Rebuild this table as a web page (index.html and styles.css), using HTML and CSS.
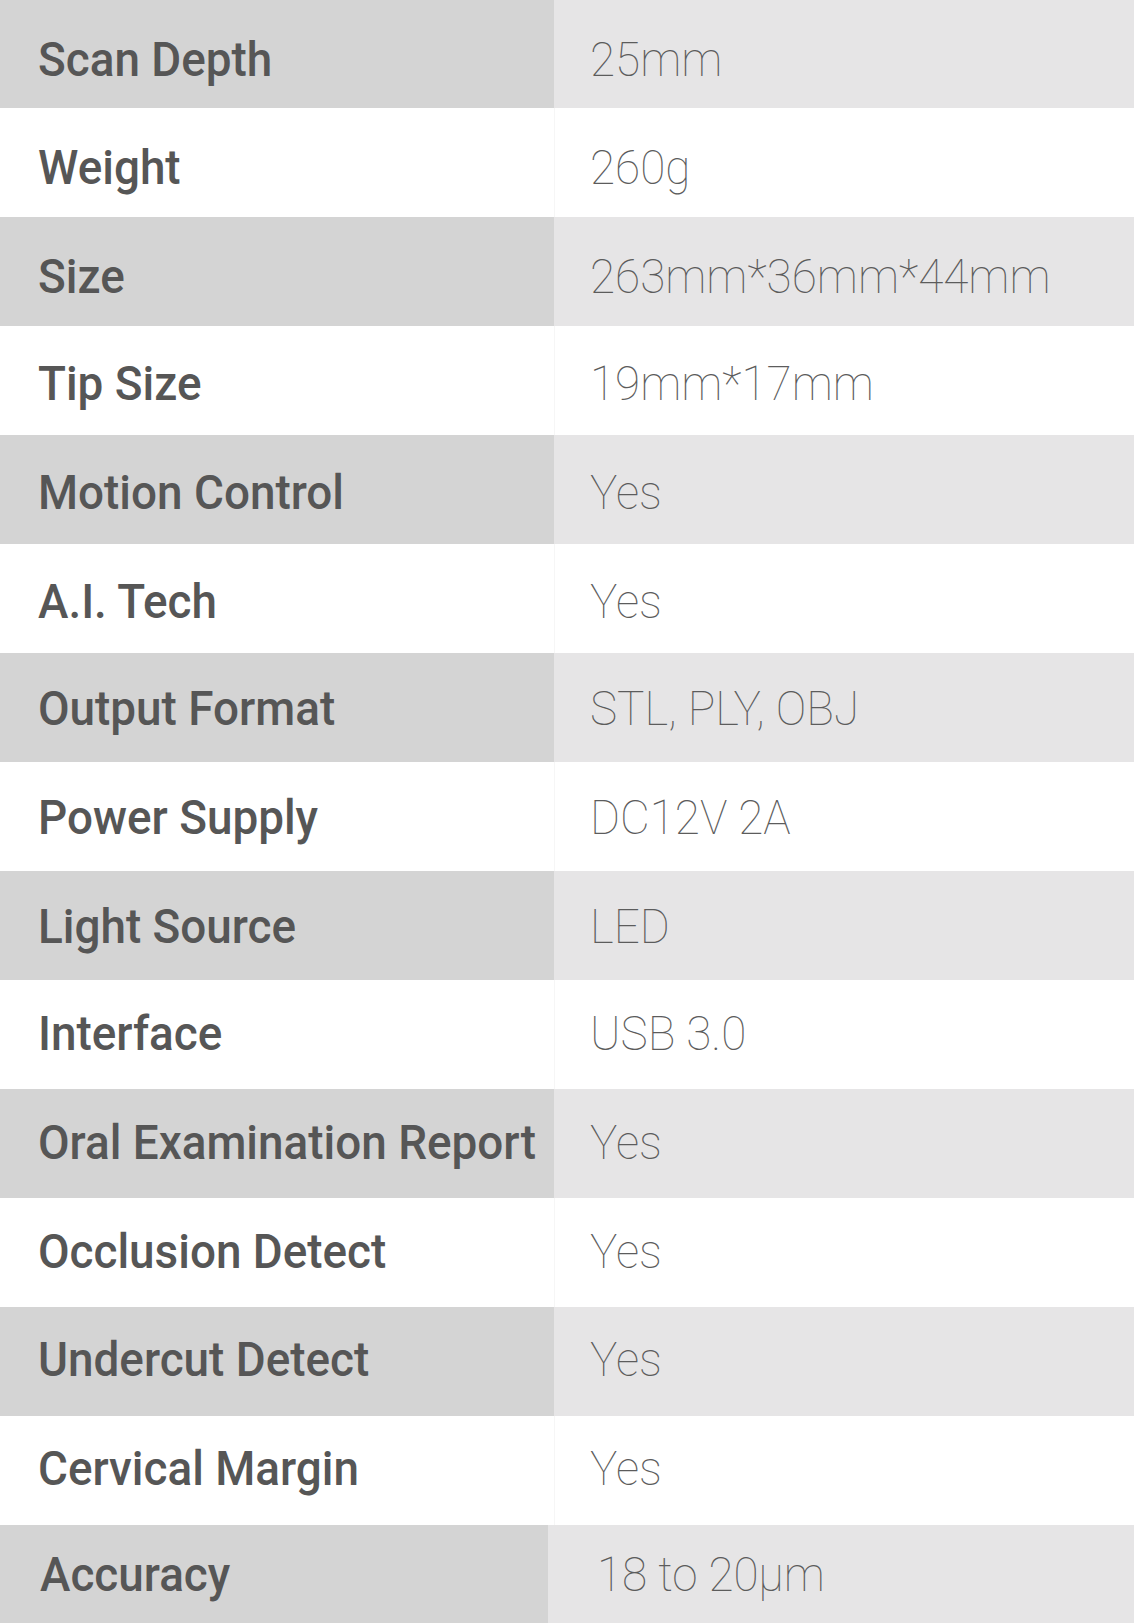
FILE: index.html
```html
<!DOCTYPE html>
<html>
<head>
<meta charset="utf-8">
<link rel="stylesheet" href="styles.css">
</head>
<body>
<div class="specs">
  <div class="row"><div class="label"><span>Scan Depth</span></div><div class="value"><span>25mm</span></div></div>
  <div class="row"><div class="label"><span>Weight</span></div><div class="value"><span>260g</span></div></div>
  <div class="row"><div class="label"><span>Size</span></div><div class="value"><span>263mm*36mm*44mm</span></div></div>
  <div class="row"><div class="label"><span>Tip Size</span></div><div class="value"><span>19mm*17mm</span></div></div>
  <div class="row"><div class="label"><span>Motion Control</span></div><div class="value"><span>Yes</span></div></div>
  <div class="row"><div class="label"><span>A.I. Tech</span></div><div class="value"><span>Yes</span></div></div>
  <div class="row"><div class="label"><span>Output Format</span></div><div class="value"><span>STL, PLY, OBJ</span></div></div>
  <div class="row"><div class="label"><span>Power Supply</span></div><div class="value"><span>DC12V 2A</span></div></div>
  <div class="row"><div class="label"><span>Light Source</span></div><div class="value"><span>LED</span></div></div>
  <div class="row"><div class="label"><span>Interface</span></div><div class="value"><span>USB 3.0</span></div></div>
  <div class="row"><div class="label"><span>Oral Examination Report</span></div><div class="value"><span>Yes</span></div></div>
  <div class="row"><div class="label"><span>Occlusion Detect</span></div><div class="value"><span>Yes</span></div></div>
  <div class="row"><div class="label"><span>Undercut Detect</span></div><div class="value"><span>Yes</span></div></div>
  <div class="row"><div class="label"><span>Cervical Margin</span></div><div class="value"><span>Yes</span></div></div>
  <div class="row last"><div class="label"><span>Accuracy</span></div><div class="value"><span>18 to 20μm</span></div></div>
</div>
</body>
</html>
```
FILE: styles.css
```css
html, body {
  margin: 0;
  padding: 0;
  background: #ffffff;
  overflow: hidden;
}

.specs {
  display: flex;
  flex-direction: column;
  width: 1134px;
  font-family: Roboto, "Liberation Sans", sans-serif;
}

.row {
  display: grid;
  grid-template-columns: 554px 1fr;
  height: 109px;
  background: #ffffff;
  --pt: 6px;
}

.row:first-child {
  height: 108px;
}

.row:nth-child(-n+3) { --pt: 10px; }
.row:nth-child(n+4):nth-child(-n+6) { --pt: 8px; }
.row:nth-child(n+7):nth-child(-n+9) { --pt: 6px; }
.row:nth-child(n+10):nth-child(-n+12) { --pt: 4px; }
.row:nth-child(n+13):nth-child(-n+14) { --pt: 3px; }

.label,
.value {
  font-size: 48px;
  line-height: 100px;
  padding-top: var(--pt);
  white-space: nowrap;
  overflow: visible;
}

.label span,
.value span {
  display: inline-block;
  transform: scaleX(0.955);
  transform-origin: left center;
}

.label {
  padding-left: 38px;
  font-weight: 500;
  color: #565656;
}

.value {
  padding-left: 35px;
  font-weight: 100;
  color: #5c5c5c;
  border-left: 1px solid #f6f6f6;
}

.row:nth-child(odd) .label {
  background: #d4d4d4;
}

.row:nth-child(odd) .value {
  background: #e6e5e6;
  border-left-color: #e6e5e6;
}

.row.last {
  grid-template-columns: 548px 1fr;
  --pt: 0px;
}

.row.last .label,
.row.last .value {
  line-height: 99px;
}

.row.last .label {
  padding-left: 40px;
}

.row.last .value {
  padding-left: 48px;
}
```
